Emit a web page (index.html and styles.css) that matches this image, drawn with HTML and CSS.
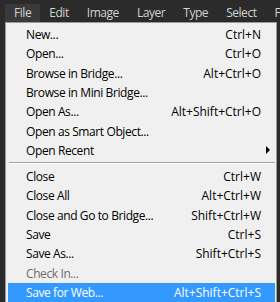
FILE: index.html
```html
<!DOCTYPE html>
<html>
<head>
<meta charset="utf-8">
<link rel="stylesheet" href="styles.css">
</head>
<body>
<div class="app">
  <div class="menubar">
    <span class="mb-item active">File</span>
    <span class="mb-item">Edit</span>
    <span class="mb-item">Image</span>
    <span class="mb-item">Layer</span>
    <span class="mb-item">Type</span>
    <span class="mb-item">Select</span>
    <span class="mb-item">Filter</span>
  </div>
  <div class="workspace">
    <div class="menu">
      <div class="row"><span class="label">New...</span><span class="key">Ctrl+N</span></div>
      <div class="row"><span class="label">Open...</span><span class="key">Ctrl+O</span></div>
      <div class="row"><span class="label">Browse in Bridge...</span><span class="key">Alt+Ctrl+O</span></div>
      <div class="row"><span class="label">Browse in Mini Bridge...</span><span class="key"></span></div>
      <div class="row"><span class="label">Open As...</span><span class="key">Alt+Shift+Ctrl+O</span></div>
      <div class="row"><span class="label">Open as Smart Object...</span><span class="key"></span></div>
      <div class="row"><span class="label">Open Recent</span><span class="arrow"></span></div>
      <div class="sep"></div>
      <div class="row"><span class="label">Close</span><span class="key">Ctrl+W</span></div>
      <div class="row"><span class="label">Close All</span><span class="key">Alt+Ctrl+W</span></div>
      <div class="row"><span class="label">Close and Go to Bridge...</span><span class="key">Shift+Ctrl+W</span></div>
      <div class="row"><span class="label">Save</span><span class="key">Ctrl+S</span></div>
      <div class="row"><span class="label">Save As...</span><span class="key">Shift+Ctrl+S</span></div>
      <div class="row disabled"><span class="label">Check In...</span><span class="key"></span></div>
      <div class="row selected"><span class="label">Save for Web...</span><span class="key">Alt+Shift+Ctrl+S</span></div>
    </div>
  </div>
</div>
</body>
</html>
```

FILE: styles.css
```css
html, body {
  margin: 0;
  padding: 0;
  background: #2b2b2b;
  overflow: hidden;
}
.app {
  width: 280px;
  height: 302px;
  overflow: hidden;
  font-family: "Open Sans", "Noto Sans", sans-serif;
  font-size: 12px;
}
.menubar {
  height: 22px;
  display: flex;
  align-items: flex-end;
  padding-left: 5px;
  background: #2b2b2b;
  white-space: nowrap;
  overflow: hidden;
}
.mb-item {
  height: 18px;
  line-height: 18px;
  padding: 0 9px;
  color: #d2d2d2;
  letter-spacing: -0.45px;
}
.mb-item.active {
  background: #3a3a3a;
}
.workspace {
  display: flex;
  padding-left: 5px;
  height: 280px;
  background: #2b2b2b;
}
.menu {
  width: 272px;
  box-sizing: border-box;
  border: 1px solid #9a9a9a;
  border-bottom: none;
  background: #f0f0f0;
  padding: 2px 1px 0 2px;
}
.row {
  height: 19.3px;
  display: flex;
  align-items: center;
  justify-content: space-between;
  padding: 0 14px 0 18px;
  color: #000;
  white-space: nowrap;
}
.label {
  letter-spacing: -0.4px;
}
.row.disabled {
  color: #6d6d6d;
}
.row.selected {
  background: #3399ff;
  color: #fff;
}
.arrow {
  width: 0;
  height: 0;
  border-top: 4px solid transparent;
  border-bottom: 4px solid transparent;
  border-left: 4px solid #000;
  margin-right: -9px;
}
.sep {
  height: 6.8px;
  box-sizing: border-box;
  padding-top: 2px;
  margin-left: 1px;
}
.sep::before {
  content: "";
  display: block;
  height: 1px;
  background: #a0a0a0;
  border-bottom: 1px solid #fff;
}
```
